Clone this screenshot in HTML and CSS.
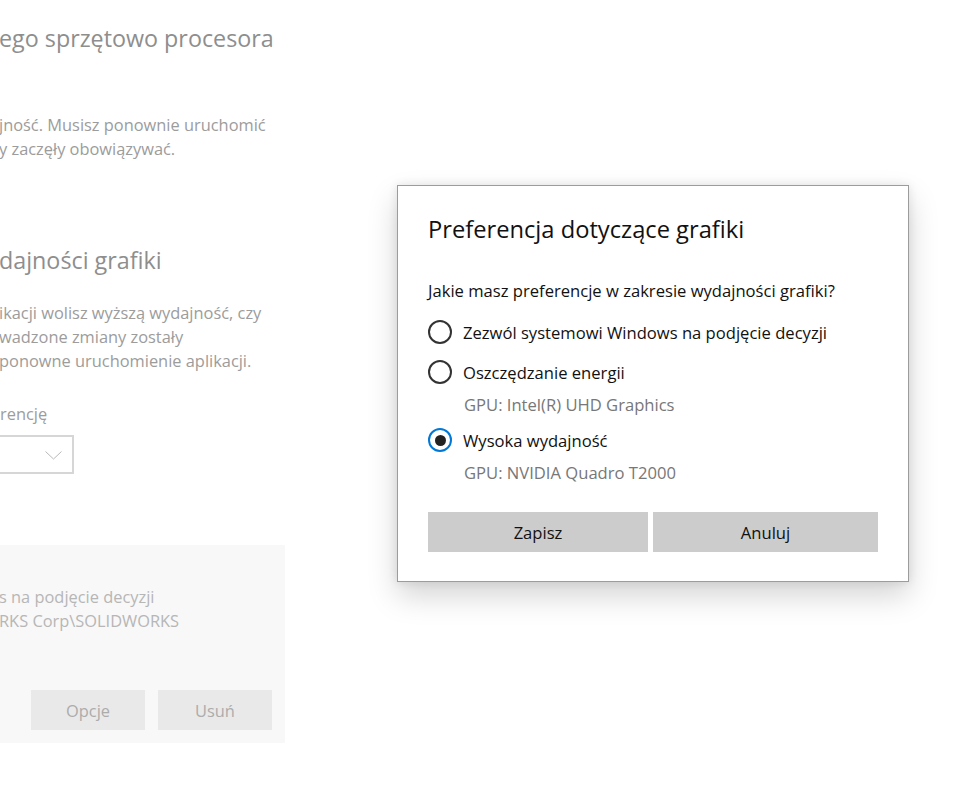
FILE: index.html
```html
<!DOCTYPE html>
<html lang="pl">
  <head>
    <meta charset="UTF-8" />
    <meta name="viewport" content="width=device-width, initial-scale=1.0" />
    <title>Ustawienia grafiki</title>
    <link rel="stylesheet" href="styles.css">
  </head>
  <body>
    <div class="screen">
      <!-- settings page behind the dialog, cut at the left edge -->
      <div class="settings">
        <h2 class="title first">ego sprzętowo procesora</h2>
        <p class="text t1">jność. Musisz ponownie uruchomić<br />y zaczęły obowiązywać.</p>

        <h2 class="title second">dajności grafiki</h2>
        <p class="text t2">ikacji wolisz wyższą wydajność, czy<br />wadzone zmiany zostały<br />ponowne uruchomienie aplikacji.</p>

        <div class="label">rencję</div>
        <div class="select">
          <svg width="17" height="9" viewBox="0 0 17 9">
            <path d="M0.5 0.5 L8.5 8 L16.5 0.5" fill="none" stroke="#b8b8b8" stroke-width="1" />
          </svg>
        </div>

        <div class="app-card">
          <div class="app-text">s na podjęcie decyzji<br />RKS Corp\SOLIDWORKS</div>
          <div class="app-buttons">
            <button class="ghost-btn">Opcje</button>
            <button class="ghost-btn">Usuń</button>
          </div>
        </div>
      </div>

      <div class="dialog-area">
        <div class="dialog">
          <div class="dialog-title">Preferencja dotyczące grafiki</div>
          <div class="question">Jakie masz preferencje w zakresie wydajności grafiki?</div>

          <div class="option">
            <span class="radio"></span>
            <span>Zezwól systemowi Windows na podjęcie decyzji</span>
          </div>
          <div class="option">
            <span class="radio"></span>
            <span>Oszczędzanie energii</span>
          </div>
          <div class="gpu">GPU: Intel(R) UHD Graphics</div>
          <div class="option">
            <span class="radio checked"></span>
            <span>Wysoka wydajność</span>
          </div>
          <div class="gpu">GPU: NVIDIA Quadro T2000</div>

          <div class="dialog-buttons">
            <button class="btn save">Zapisz</button>
            <button class="btn">Anuluj</button>
          </div>
        </div>
      </div>
    </div>
  </body>
</html>
```

FILE: styles.css
```css
html,
body {
  margin: 0;
  height: 100%;
  background: #ffffff;
  overflow: hidden;
}
body {
  font-family: "Open Sans", "Noto Sans", sans-serif;
  color: #000;
}
.screen {
  display: flex;
  align-items: flex-start;
}

/* faded page in the back */
.settings {
  width: 285px;
  flex: none;
  overflow: hidden;
  padding-top: 22px;
}
.title {
  margin: 0 0 0 -1px;
  font-weight: 400;
  font-size: 23.3px;
  line-height: 32px;
  color: #8e8e8e;
  white-space: nowrap;
}
.text {
  margin: 0 0 0 -1px;
  font-size: 16.4px;
  line-height: 24px;
  color: #9c9c9c;
  white-space: nowrap;
}
.t1 {
  margin-top: 59px;
}
.second {
  margin-top: 83px;
}
.t2 {
  margin-top: 25px;
}
.label {
  margin-top: 29px;
  font-size: 16.4px;
  line-height: 24px;
  color: #9c9c9c;
}
.select {
  margin-top: 9px;
  margin-left: -6px;
  width: 66px;
  height: 35px;
  border: 2px solid #d6d6d6;
  display: flex;
  align-items: center;
  justify-content: flex-end;
  padding-right: 10px;
}
.select svg {
  margin-top: 1px;
}
.app-card {
  margin-top: 71px;
  height: 198px;
  background: #f8f8f8;
  box-sizing: border-box;
  padding: 40px 13px 0 0;
  display: flex;
  flex-direction: column;
}
.app-text {
  font-size: 16.4px;
  line-height: 24px;
  color: #b6b6b6;
  white-space: nowrap;
  margin-left: -1px;
}
.app-buttons {
  margin-top: 57px;
  display: flex;
  justify-content: flex-end;
  gap: 13px;
}
.ghost-btn {
  width: 114px;
  height: 40px;
  border: 0;
  background: #e9e9e9;
  color: #acacac;
  font-family: inherit;
  font-size: 16.4px;
  padding: 0;
}

/* dialog */
.dialog-area {
  padding: 185px 0 0 112px;
}
.dialog {
  width: 512px;
  height: 397px;
  box-sizing: border-box;
  border: 1px solid #9c9c9c;
  background: #fff;
  padding: 27px 30px 0 30px;
  box-shadow: 0 14px 28px rgba(0, 0, 0, 0.17), 0 0 9px rgba(0, 0, 0, 0.1);
}
.dialog-title {
  font-size: 23.7px;
  line-height: 32px;
  color: #111;
}
.question {
  margin-top: 34px;
  font-size: 16.6px;
  line-height: 24px;
  color: #111;
}
.option {
  display: flex;
  align-items: center;
  height: 40px;
  font-size: 16.6px;
  color: #111;
}
.question + .option {
  margin-top: 9px;
}
.radio {
  width: 24px;
  height: 24px;
  box-sizing: border-box;
  border: 2.5px solid #333;
  border-radius: 50%;
  margin-right: 11px;
  flex: none;
  display: flex;
  align-items: center;
  justify-content: center;
}
.radio.checked {
  border-color: #0078d7;
}
.radio.checked::after {
  content: "";
  width: 11px;
  height: 11px;
  border-radius: 50%;
  background: #222;
}
.gpu {
  margin: 1px 0 3px 36px;
  font-size: 16.6px;
  line-height: 24px;
  color: #777;
}
.dialog-buttons {
  margin-top: 27px;
  display: flex;
  gap: 5px;
}
.btn {
  flex: 1;
  height: 40px;
  border: 0;
  background: #cccccc;
  color: #111;
  font-family: inherit;
  font-size: 16.6px;
  padding: 0;
}
.btn.save {
  flex: none;
  width: 220px;
}
```
